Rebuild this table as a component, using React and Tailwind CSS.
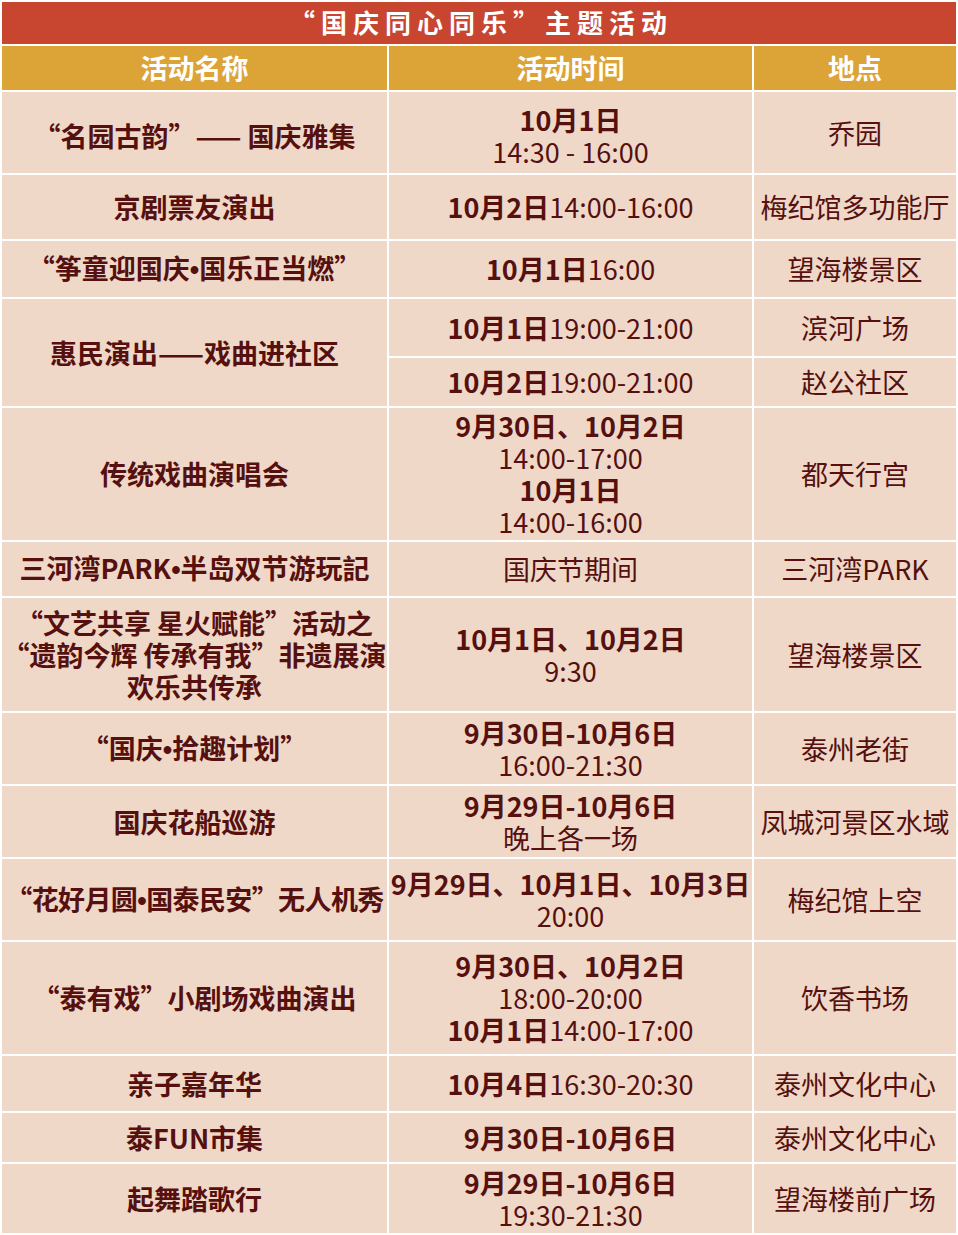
import React from 'react';

const B = ({ children }) => <span className="font-bold">{children}</span>;
// narrow bullet, as in the reference (CJK font draws it full width)
const Dot = () => <span className="font-['Liberation_Sans',sans-serif]">•</span>;

// name, time, place
const rows = [
  [<div className="pt-[6px]">“名园古韵”—— 国庆雅集</div>, <div className="pt-[6px]"><B>10月1日</B><br />14:30 - 16:00</div>, '乔园'],
  ['京剧票友演出', <><B>10月2日</B>14:00-16:00</>, '梅纪馆多功能厅'],
  [<>“筝童迎国庆<Dot />国乐正当燃”</>, <><B>10月1日</B>16:00</>, '望海楼景区'],
  'split',
  ['传统戏曲演唱会', <><B>9月30日、10月2日</B><br />14:00-17:00<br /><B>10月1日</B><br />14:00-16:00</>, '都天行宫'],
  [<>三河湾PARK<Dot />半岛双节游玩記</>, '国庆节期间', '三河湾PARK'],
  [<>“文艺共享 星火赋能”活动之<br />“遗韵今辉 传承有我”非遗展演<br />欢乐共传承</>, <><B>10月1日、10月2日</B><br />9:30</>, '望海楼景区'],
  [<>“国庆<Dot />拾趣计划”</>, <><B>9月30日-10月6日</B><br />16:00-21:30</>, '泰州老街'],
  ['国庆花船巡游', <><B>9月29日-10月6日</B><br />晚上各一场</>, '凤城河景区水域'],
  [<span className="tracking-[-0.6px]">“花好月圆<Dot />国泰民安”无人机秀</span>, <><B>9月29日、10月1日、10月3日</B><br />20:00</>, '梅纪馆上空'],
  ['“泰有戏”小剧场戏曲演出', <><B>9月30日、10月2日</B><br />18:00-20:00<br /><B>10月1日</B>14:00-17:00</>, '饮香书场'],
  ['亲子嘉年华', <><B>10月4日</B>16:30-20:30</>, '泰州文化中心'],
  ['泰FUN市集', <B>9月30日-10月6日</B>, '泰州文化中心'],
  ['起舞踏歌行', <><B>9月29日-10月6日</B><br />19:30-21:30</>, '望海楼前广场'],
];

const cell = "bg-[#f0d8c8] flex items-center justify-center text-center whitespace-nowrap";

export default function App() {
  return (
    <div className="w-[958px] h-[1235px] bg-white font-['Noto_Sans_CJK_SC',sans-serif] text-[#55100f] text-[27px] leading-[32px]">
      <div className="grid grid-cols-[385px_363px_202px] grid-rows-[42px_44px_81px_64px_56px_57px_48px_132px_54px_113px_71px_71px_81px_112px_55px_49px_69px] gap-[2px] p-[2px]">
        <div className="col-span-3 bg-[#c8452f] text-white text-[26px] font-bold flex items-center justify-center tracking-[6px] pl-[4px] pb-[3px]">
          “国庆同心同乐”主题活动
        </div>
        {['活动名称', '活动时间', '地点'].map(h => (
          <div key={h} className="bg-[#dca337] text-white font-bold flex items-center justify-center">{h}</div>
        ))}
        {rows.map((r, i) => {
          if (r === 'split') {
            return (
              <React.Fragment key={i}>
                <div className={`${cell} row-span-2 font-bold`}>惠民演出——戏曲进社区</div>
                <div className={cell}><div><B>10月1日</B>19:00-21:00</div></div>
                <div className={cell}>滨河广场</div>
                <div className={cell}><div><B>10月2日</B>19:00-21:00</div></div>
                <div className={cell}>赵公社区</div>
              </React.Fragment>
            );
          }
          return (
            <React.Fragment key={i}>
              <div className={`${cell} font-bold`}><div>{r[0]}</div></div>
              <div className={cell}><div>{r[1]}</div></div>
              <div className={cell}><div>{r[2]}</div></div>
            </React.Fragment>
          );
        })}
      </div>
    </div>
  );
}
